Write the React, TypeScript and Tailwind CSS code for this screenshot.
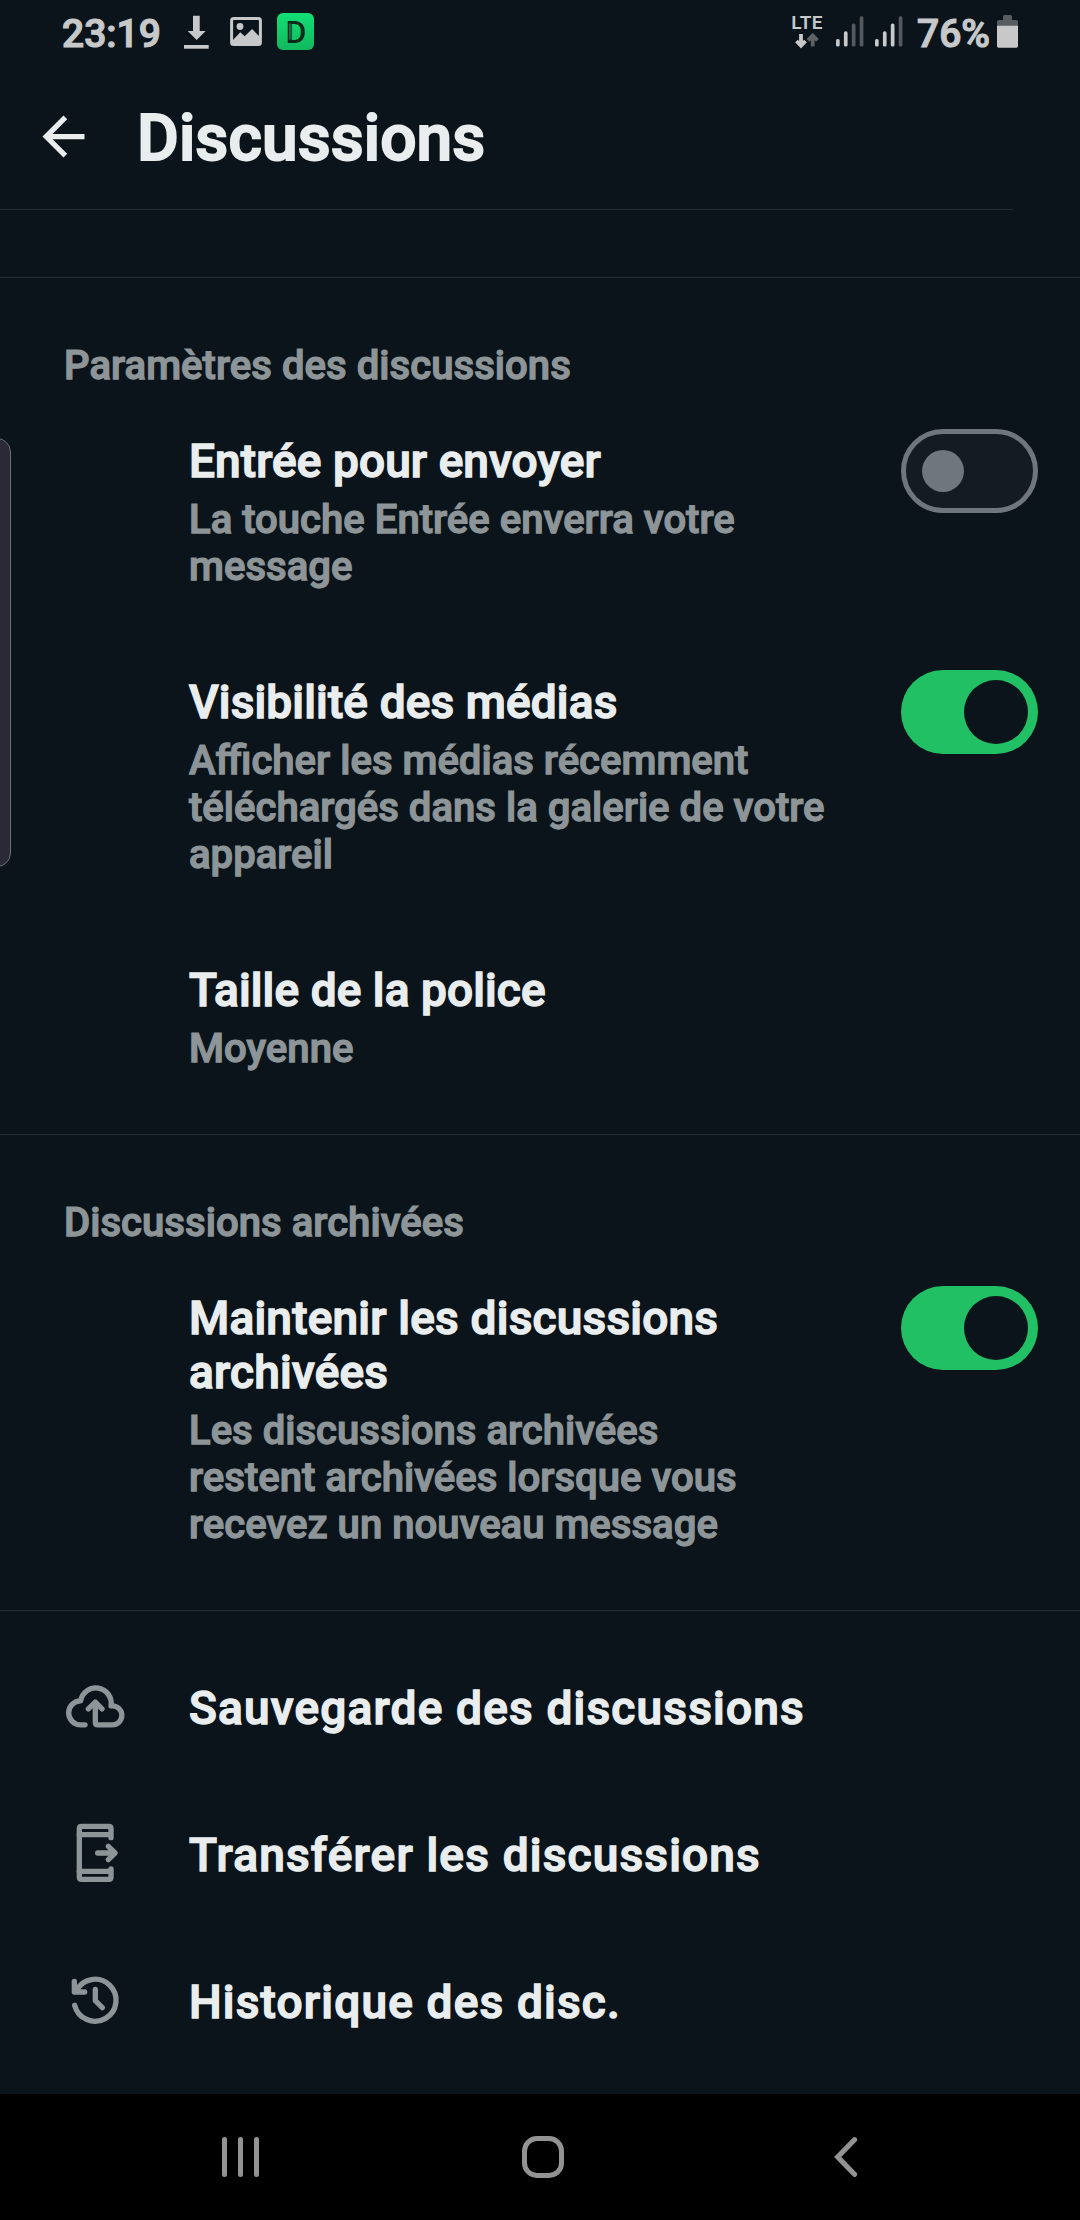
import React from 'react';

type ToggleState = 'on' | 'off';

const titleText =
  'text-[46px] leading-[54px] font-medium text-[#e9edee] [-webkit-text-stroke:1.4px_#e9edee] whitespace-pre-line';
const bodyText =
  'text-[40.1px] leading-[47px] font-medium text-[#8d9598] [-webkit-text-stroke:1.25px_#8d9598] whitespace-pre-line';

function Signal({ lit }: { lit: number }) {
  const tops = [39, 31.3, 23.5, 16.3];
  return (
    <svg width="28" height="66" viewBox="0 0 28 66">
      {tops.map((top, i) => (
        <rect
          key={top}
          x={i * 7.9}
          y={top}
          width="3.7"
          height={46.5 - top}
          rx="1.6"
          fill={i < lit ? '#c6c8c9' : '#53595d'}
        />
      ))}
    </svg>
  );
}

function StatusBar() {
  return (
    <div className="flex h-[66px] items-start pr-[62px] pl-[62px]">
      <span className="mt-[11px] w-[99px] text-[39px] leading-[46px] font-medium text-[#c6c8c9] [-webkit-text-stroke:1.2px_#c6c8c9]">
        23:19
      </span>
      <svg className="ml-[22px]" width="26" height="66" viewBox="183 0 26 66" fill="#c6c8c9">
        <path d="M193 15.7h6.7V31h6L196.700 40l-9-9h5.300z" />
        <rect x="184" y="45" width="24.700" height="3.700" />
      </svg>
      <svg className="ml-[21px]" width="32" height="66" viewBox="230 0 32 66" fill="#c6c8c9">
        <rect x="231.600" y="18.500" width="28.800" height="26" rx="2" fill="none" stroke="#c6c8c9" strokeWidth="3" />
        <circle cx="240" cy="26.500" r="3.400" />
        <path d="M232.500 40.500l7.800-8.200 4.400 3.900 7.400-7.300 7.400 7.700V45h-27z" />
      </svg>
      <svg className="ml-[15px]" width="37" height="66" viewBox="277 0 37 66">
        <defs>
          <linearGradient id="badge" x1="0" y1="0" x2="0" y2="1">
            <stop offset="0" stopColor="#12df74" />
            <stop offset="1" stopColor="#12b85e" />
          </linearGradient>
        </defs>
        <rect x="277" y="13" width="37" height="37" rx="6" fill="url(#badge)" />
        <text x="285.500" y="43" fontSize="32" fontWeight="500" fill="#0b2a1c">
          D
        </text>
        <path d="M290 23.500v16" stroke="#12c868" strokeWidth="0.900" />
      </svg>
      <div className="ml-auto flex items-start">
        <div className="flex w-[32px] flex-col items-center">
          <span className="mt-[13px] text-[19px] leading-[20px] font-semibold tracking-[0.4px] text-[#c6c8c9]">LTE</span>
          <svg width="24" height="17" viewBox="796 33 24 17" fill="none" strokeWidth="3.800">
            <path d="M802 34v12M797.500 41l4.500 4.800 4.500-4.800" stroke="#c6c8c9" />
            <path d="M813.700 46.500V35.500M809 40.300l4.700-4.800 4.700 4.800" stroke="#5c6265" />
          </svg>
        </div>
        <div className="ml-[13px] flex gap-[11px]">
          <Signal lit={2} />
          <Signal lit={3} />
        </div>
        <span className="mt-[11px] ml-[14px] w-[73px] text-[39px] leading-[46px] font-medium text-[#c6c8c9] [-webkit-text-stroke:1.2px_#c6c8c9]">
          76%
        </span>
        <svg className="ml-[7px]" width="21" height="66" viewBox="997 0 21 66">
          <path d="M1003 20v-3.500q0-1.500 1.500-1.500h6q1.500 0 1.500 1.500V20h4.500q1.500 0 1.500 1.500V26h-21v-4.500q0-1.500 1.500-1.500z" fill="#565c60" />
          <path d="M997 25.700h21V46q0 1.700-1.700 1.700h-17.600Q997 47.700 997 46z" fill="#c6c8c9" />
        </svg>
      </div>
    </div>
  );
}

function Toggle({ state }: { state: ToggleState }) {
  return state === 'on' ? (
    <div className="flex h-[84px] w-[137px] items-center justify-end rounded-full bg-[#22c064] pr-[10px]">
      <div className="size-[64px] rounded-full bg-[#0b141a]" />
    </div>
  ) : (
    <div className="flex h-[84px] w-[137px] items-center rounded-full border-[5px] border-[#6f767d] bg-[#141b22] pl-[16px]">
      <div className="size-[42px] rounded-full bg-[#6f767d]" />
    </div>
  );
}

function Setting({
  title,
  detail,
  toggle,
  tracking = 'tracking-[0.080px]',
}: {
  title: string;
  detail: string;
  toggle?: ToggleState;
  tracking?: string;
}) {
  return (
    <div className="flex items-start justify-between pr-[42px] pl-[189px]">
      <div className="flex flex-col gap-2">
        <div className={`${titleText} ${tracking}`}>{title}</div>
        <div className={bodyText}>{detail}</div>
      </div>
      {toggle && (
        <div className="-mt-[5px] h-0">
          <Toggle state={toggle} />
        </div>
      )}
    </div>
  );
}

function SectionLabel({ children }: { children: React.ReactNode }) {
  return <div className={`${bodyText} pt-[64px] pb-[45px] pl-[64px] tracking-[0.030px]`}>{children}</div>;
}

const Divider = () => <div className="h-px bg-[#222c32]" />;

function Action({ icon, label }: { icon: React.ReactNode; label: string }) {
  return (
    <div className="flex h-[147px] items-center">
      <div className="-mt-1 flex w-[189px] justify-center">{icon}</div>
      <div className={`${titleText} tracking-[1.180px]`}>{label}</div>
    </div>
  );
}

const iconStroke = {
  fill: 'none',
  stroke: '#8d9598',
  strokeWidth: 16,
  strokeLinecap: 'round' as const,
  strokeLinejoin: 'round' as const,
};

const CloudIcon = () => (
  <svg width="62" height="48" viewBox="190 124.500 186 144" {...iconStroke}>
    <path d="M253 253H240A36 36 0 0 1 240 181A45.500 45.500 0 0 1 331 196H335A28.500 28.500 0 0 1 335 253H291Q284 253 284 246V188" />
    <path d="M263 205L284 185L304 205" />
  </svg>
);

const PhoneIcon = () => (
  <svg width="62" height="62" viewBox="190 544 186 186" {...iconStroke}>
    <path d="M331 591V563Q331 557 325 557H242Q236 557 236 563V710Q236 716 242 716H325Q331 716 331 710V685" />
    <path d="M236 582H328M236 692H328" />
    <path d="M291 637H340M323 617L343 637L323 657" />
  </svg>
);

const HistoryIcon = () => (
  <svg width="62" height="62" viewBox="190 985 186 186" {...iconStroke}>
    <path d="M222 1094A63 63 0 1 0 227 1050" />
    <path d="M221 1022V1054H252" />
    <path d="M284 1046V1080L305 1101" />
  </svg>
);

export default function App() {
  return (
    <div className="relative flex h-[2220px] w-[1080px] flex-col overflow-hidden bg-[#0b141a] font-['Roboto',sans-serif]">
      <StatusBar />
      <header className="flex h-[143px] items-center pb-[2px] pl-[32px]">
        <svg width="63" height="63" viewBox="0 0 24 24" fill="#e9edee">
          <path d="M20 11H7.830l5.590-5.590L12 4l-8 8 8 8 1.410-1.410L7.830 13H20z" />
        </svg>
        <h1 className="mt-1 ml-[42px] text-[64px] leading-[76px] font-medium tracking-[0.120px] text-[#e9edee] [-webkit-text-stroke:2px_#e9edee]">
          Discussions
        </h1>
      </header>

      <div className="w-[1013px]">
        <Divider />
      </div>
      <div className="h-[67px]" />

      <section>
        <Divider />
        <SectionLabel>Paramètres des discussions</SectionLabel>
        <div className="flex flex-col gap-[85px] pb-[62px]">
          <Setting title="Entrée pour envoyer" detail={'La touche Entrée enverra votre\nmessage'} toggle="off" />
          <Setting
            title="Visibilité des médias"
            detail={'Afficher les médias récemment\ntéléchargés dans la galerie de votre\nappareil'}
            toggle="on"
            tracking="tracking-[0.130px]"
          />
          <Setting title="Taille de la police" detail="Moyenne" />
        </div>
      </section>

      <section>
        <Divider />
        <SectionLabel>Discussions archivées</SectionLabel>
        <div className="pb-[62px]">
          <Setting
            title={'Maintenir les discussions\narchivées'}
            detail={'Les discussions archivées\nrestent archivées lorsque vous\nrecevez un nouveau message'}
            toggle="on"
            tracking="tracking-[0.200px]"
          />
        </div>
      </section>

      <section>
        <Divider />
        <div className="pt-[23px]">
          <Action icon={<CloudIcon />} label="Sauvegarde des discussions" />
          <Action icon={<PhoneIcon />} label="Transférer les discussions" />
          <Action icon={<HistoryIcon />} label="Historique des disc." />
        </div>
      </section>

      <nav className="mt-auto flex h-[126px] items-center bg-black pr-[222px] pl-[222px]">
        <div className="flex gap-[11px]">
          <div className="h-[40px] w-[5px] rounded-full bg-[#939393]" />
          <div className="h-[40px] w-[5px] rounded-full bg-[#939393]" />
          <div className="h-[40px] w-[5px] rounded-full bg-[#939393]" />
        </div>
        <div className="ml-[263px] size-[42px] rounded-[15px] border-[5px] border-[#939393]" />
        <svg
          className="ml-auto"
          width="24"
          height="42"
          viewBox="0 0 24 42"
          fill="none"
          stroke="#939393"
          strokeWidth="5.200"
          strokeLinecap="round"
        >
          <path d="M20.500 3.700L3.700 21l16.800 17.300" />
        </svg>
      </nav>

      {/* Edge panel handle overlapping the left side of the screen */}
      <div className="absolute top-[438px] -left-[20px] h-[429px] w-[31px] rounded-[14px] border border-[#6c6d76] bg-[#2a2938]" />
    </div>
  );
}
